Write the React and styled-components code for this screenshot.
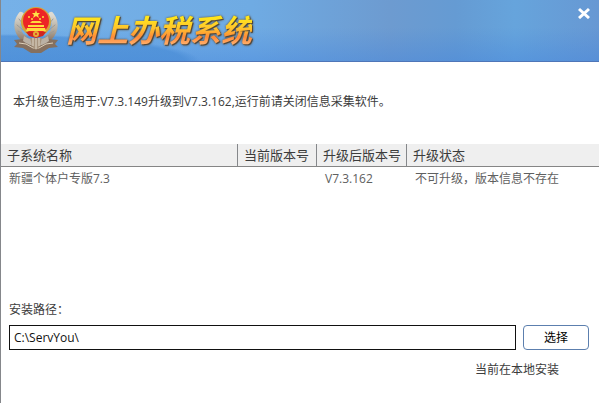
import React, { useState } from "react";
import styled, { createGlobalStyle } from "styled-components";

const GlobalStyle = createGlobalStyle`
  * { box-sizing: border-box; }
  body {
    margin: 0;
    background: #fff;
    color: #3c3c3c;
    font: 12px/16px "Open Sans", "Noto Sans CJK SC", sans-serif;
  }
`;

const Window = styled.main`
  display: flex;
  flex-direction: column;
  min-height: 100vh;
  border-left: 1px solid #85878b;
`;

const Banner = styled.header`
  display: flex;
  align-items: flex-start;
  height: 62px;
  padding: 5px 7px 0 11px;
  border-bottom: 1px solid #4f76b8;
  background:
    radial-gradient(ellipse 200px 28px at 0 62px, rgba(70, 138, 212, 0.6) 92%, transparent 100%),
    linear-gradient(to bottom, transparent 45%, rgba(65, 130, 220, 0.4) 100%),
    linear-gradient(to right, #76b1e8 0%, #6fabe3 42%, #6d9bd0 65%, #659bd3 76%, #66a4dc 86%, #6798d3 100%);
`;

const EmblemIcon = styled.svg`
  flex: none;
  width: 48px;
  height: 50px;
`;

const Title = styled.h1`
  margin: 2px auto 0 6px;
  font: italic 700 31px/44px "Noto Sans CJK SC", sans-serif;
  color: transparent;
  background: linear-gradient(to bottom, #ffe51c 25%, #ffc52d 48%, #ff8b38 68%, #ffb575 88%);
  background-clip: text;
  -webkit-background-clip: text;
  filter: drop-shadow(1px 1px 0 #51483c) drop-shadow(0 0 1px #5a5040);
`;

const CloseButton = styled.button`
  display: grid;
  place-items: center;
  width: 16px;
  height: 16px;
  padding: 0;
  border: 0;
  background: none;
  color: #fff;
  cursor: pointer;
`;

const Notice = styled.p`
  margin: 0;
  padding: 32px 12px 34px;
`;

const VersionTable = styled.table`
  width: 100%;
  table-layout: fixed;
  border-collapse: separate;
  border-spacing: 0;
  text-align: left;
`;

const HeadCell = styled.th`
  width: ${({ $width }) => $width || "auto"};
  height: 23px;
  padding: 0 6px;
  border-right: ${({ $last }) => ($last ? "0" : "1px solid #85878a")};
  border-bottom: 1px solid #858585;
  background: #efefef;
  font-size: 13px;
  font-weight: 400;
  line-height: 20px;
  white-space: nowrap;
`;

const Cell = styled.td`
  height: 23px;
  padding: 1px 8px 0;
  color: #606060;
  white-space: nowrap;
`;

const InstallForm = styled.form`
  display: flex;
  flex-direction: column;
  margin-top: 112px;
  padding: 0 10px 24px 8px;
`;

const PathLabel = styled.label`
  margin-bottom: 7px;
`;

const PathRow = styled.div`
  display: flex;
  gap: 7px;
`;

const PathInput = styled.input`
  flex: 1;
  min-width: 0;
  height: 25px;
  padding: 0 4px;
  border: 1px solid #111;
  border-radius: 0;
  background: #fff;
  color: #111;
  font: inherit;
`;

const ChooseButton = styled.button`
  width: 66px;
  height: 25px;
  padding: 0;
  border: 1px solid #5c7fae;
  border-radius: 4px;
  background: #fff;
  color: #000;
  font: inherit;
  cursor: pointer;
`;

const Status = styled.p`
  align-self: flex-end;
  margin: 12px 30px 0 0;
`;

const columns = [
  { name: "子系统名称", width: "237px" },
  { name: "当前版本号", width: "79px" },
  { name: "升级后版本号", width: "90px" },
  { name: "升级状态" },
];

const rows = [["新疆个体户专版7.3", "", "V7.3.162", "不可升级，版本信息不存在"]];

function Emblem() {
  return (
    <EmblemIcon viewBox="0 0 48 50" aria-hidden="true">
      <defs>
        <linearGradient id="wheat" x1="0" y1="0" x2="0" y2="1">
          <stop offset="0" stopColor="#dedbd2" />
          <stop offset="0.6" stopColor="#b0a79a" />
          <stop offset="1" stopColor="#8a7463" />
        </linearGradient>
      </defs>
      <g fill="none" stroke="url(#wheat)" strokeLinecap="round">
        <path d="M9 10C3 18 4 29 15 36M39 10C45 18 44 29 33 36" strokeWidth="6" />
        <path d="M7 14l4 5M5 20l6 5M6 26l8 5M41 14l-4 5M43 20l-6 5M42 26l-8 5" stroke="#9a9b98" strokeWidth="1" />
      </g>
      <path d="M2 35l9-1 7 3h12l7-3 9 1-3 4 3 3-9 1-8 5H19l-8-5-9-1 3-3Z" fill="#85705f" />
      <path d="M12 31q12 8 24 0l1 5q-13 10-26 0Z" fill="#bbb1a4" />
      <path d="M7 38l7 1 7 4h6l7-4 7-1" fill="none" stroke="#ded0b9" />
      <path d="M18 33h12l-2 8-4 4-4-4Z" fill="#a7947e" />
      <path d="M21 33v8M24 33v11M27 33v8" stroke="#e0d8c9" />
      <circle cx="24" cy="17" r="15" fill="#d6a239" />
      <circle cx="24" cy="16" r="13" fill="#ed2425" />
      <path d="M24 5l1 3h3l-2 2 1 3-3-2-3 2 1-3-2-2h3Z" fill="#ffe246" />
      <g fill="#ffdb3d">
        <circle cx="17" cy="12" r="1" />
        <circle cx="20" cy="14" r="1" />
        <circle cx="28" cy="14" r="1" />
        <circle cx="31" cy="12" r="1" />
        <path d="M18 18l2-2h8l2 2Zm-2 2h16v2H16Zm-1 3h18l1 3H14Z" />
      </g>
      <path d="M14 27h20l-3 4-7 2-7-2Z" fill="#cf2620" />
      <circle cx="24" cy="29" r="3" fill="#e9ad36" />
      <circle cx="24" cy="29" r="1" fill="#d72c21" />
    </EmblemIcon>
  );
}

export default function App() {
  const [path, setPath] = useState("C:\\ServYou\\");

  return (
    <>
      <GlobalStyle />
      <Window>
        <Banner>
          <Emblem />
          <Title>网上办税系统</Title>
          <CloseButton type="button" aria-label="关闭">
            <svg width="12" height="12" viewBox="0 0 12 12" aria-hidden="true">
              <path d="M1 2l10 9M11 2l-10 9" stroke="currentColor" strokeWidth="3" />
            </svg>
          </CloseButton>
        </Banner>
        <Notice>本升级包适用于:V7.3.149升级到V7.3.162,运行前请关闭信息采集软件。</Notice>
        <VersionTable>
          <thead>
            <tr>
              {columns.map(({ name, width }) => (
                <HeadCell key={name} scope="col" $width={width} $last={!width}>
                  {name}
                </HeadCell>
              ))}
            </tr>
          </thead>
          <tbody>
            {rows.map((row) => (
              <tr key={row[0]}>
                {row.map((value, index) => (
                  <Cell key={columns[index].name}>{value}</Cell>
                ))}
              </tr>
            ))}
          </tbody>
        </VersionTable>
        <InstallForm onSubmit={(event) => event.preventDefault()}>
          <PathLabel htmlFor="install-path">安装路径：</PathLabel>
          <PathRow>
            <PathInput id="install-path" value={path} onChange={(event) => setPath(event.target.value)} />
            <ChooseButton type="button">选择</ChooseButton>
          </PathRow>
          <Status>当前在本地安装</Status>
        </InstallForm>
      </Window>
    </>
  );
}
